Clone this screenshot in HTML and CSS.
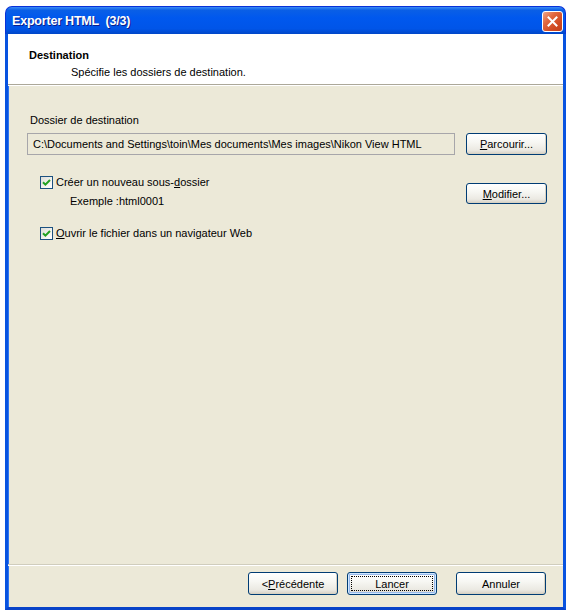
FILE: index.html
```html
<!DOCTYPE html>
<html lang="fr">
<head>
<meta charset="utf-8">
<title>Exporter HTML (3/3)</title>
<link rel="stylesheet" href="styles.css">
</head>
<body>
<div class="window">
  <div class="titlebar">
    <span class="title">Exporter HTML&nbsp; (3/3)</span>
    <span class="close" aria-label="Fermer">
      <svg width="11" height="11" viewBox="0 0 11 11"><path d="M1.5 1.5 L9.5 9.5 M9.5 1.5 L1.5 9.5" stroke="#fff" stroke-width="2" stroke-linecap="square"/></svg>
    </span>
  </div>
  <div class="frame">
    <div class="header">
      <div class="h-title">Destination</div>
      <div class="h-sub">Spécifie les dossiers de destination.</div>
    </div>
    <div class="content">
      <div class="label">Dossier de destination</div>
      <div class="row">
        <div class="field">C:\Documents and Settings\toin\Mes documents\Mes images\Nikon View HTML</div>
        <button class="btn btn-side"><u>P</u>arcourir...</button>
      </div>
      <div class="row row-check">
        <div class="check-group">
          <label class="check"><span class="box"><svg width="9" height="9" viewBox="0 0 9 9"><path d="M1 4.2 L3.4 6.6 L8 2" fill="none" stroke="#21a121" stroke-width="2"/></svg></span>Créer un nouveau sous-<u>d</u>ossier</label>
          <div class="example">Exemple :html0001</div>
        </div>
        <button class="btn btn-side btn-mod"><u>M</u>odifier...</button>
      </div>
      <label class="check check2"><span class="box"><svg width="9" height="9" viewBox="0 0 9 9"><path d="M1 4.2 L3.4 6.6 L8 2" fill="none" stroke="#21a121" stroke-width="2"/></svg></span><u>O</u>uvrir le fichier dans un navigateur Web</label>
    </div>
    <div class="footer">
      <button class="btn">&lt;<u>P</u>récédente</button>
      <button class="btn btn-default"><span class="focus">Lancer</span></button>
      <button class="btn btn-cancel">Annuler</button>
    </div>
  </div>
</div>
</body>
</html>
```
FILE: styles.css
```css
* { box-sizing: border-box; }
html, body { margin: 0; padding: 0; background: #ffffff; }
body {
  font-family: "Liberation Sans", Arial, sans-serif;
  font-size: 11px;
  color: #000;
}
.window {
  margin: 6px 0 0 5px;
  width: 561px;
  height: 604px;
  display: flex;
  flex-direction: column;
}
.titlebar {
  flex: none;
  height: 28px;
  border-radius: 7px 7px 0 0;
  background: linear-gradient(#3b8bf5 0%, #0a5fe6 12%, #0058ee 40%, #0055e8 80%, #0046c8 100%);
  border: 1px solid #0831d9;
  border-bottom: none;
  display: flex;
  align-items: center;
  justify-content: space-between;
  padding: 0 2px 0 6px;
}
.title {
  color: #fff;
  font-family: "Liberation Sans", Arial, sans-serif;
  font-weight: bold;
  font-size: 12.5px;
  letter-spacing: -0.2px;
  text-shadow: 1px 1px 0 #0a1e8c;
}
.close {
  width: 21px;
  height: 21px;
  border: 1px solid #fff;
  border-radius: 3px;
  background: linear-gradient(135deg, #f0a688 0%, #e2673f 35%, #d14a22 70%, #c2401c 100%);
  display: flex;
  align-items: center;
  justify-content: center;
  margin-top: 1px;
}
.frame {
  flex: 1;
  display: flex;
  flex-direction: column;
  background: #ece9d8;
  border-left: 3px solid #0853e0;
  border-right: 3px solid #0853e0;
  border-bottom: 3px solid #0843c8;
  box-shadow: inset 1px 0 0 #2f75f0;
}
.header {
  flex: none;
  height: 51px;
  background: #fff;
  border-bottom: 1px solid #aca899;
  padding: 15px 0 0 21px;
}
.h-title { font-weight: bold; line-height: 13px; }
.h-sub { margin: 4px 0 0 42px; line-height: 13px; }
.content {
  flex: 1;
  padding: 28px 16px 0 19px;
  border-top: 1px solid #fff;
}
.label { padding-left: 3px; line-height: 13px; }
.row {
  display: flex;
  justify-content: space-between;
  align-items: center;
  margin-top: 6px;
}
.field {
  width: 428px;
  height: 22px;
  border: 1px solid #a7a6aa;
  background: #ece9d8;
  padding: 0 0 0 5px;
  line-height: 20px;
  white-space: nowrap;
}
.btn {
  font-family: "Liberation Sans", Arial, sans-serif;
  font-size: 11px;
  color: #000;
  height: 22px;
  width: 81px;
  border: 1px solid #003c74;
  border-radius: 3px;
  background: linear-gradient(#ffffff 0%, #f7f7f3 40%, #ebe9e2 80%, #d6d0c5 100%);
  box-shadow: inset -1px -1px 0 #d8d2c3;
  padding: 0;
  display: flex;
  align-items: center;
  justify-content: center;
}
.row-check {
  align-items: flex-start;
  margin-top: 21px;
}
.check-group { padding-left: 13px; }
.check {
  display: flex;
  align-items: center;
  line-height: 13px;
}
.box {
  width: 13px;
  height: 13px;
  border: 1px solid #1c5180;
  background: linear-gradient(135deg, #dcdcd7 0%, #f3f3ef 60%, #ffffff 100%);
  margin-right: 3px;
  display: flex;
  align-items: center;
  justify-content: center;
}
.example { margin: 6px 0 0 30px; line-height: 13px; }
.btn-mod { margin-top: 7px; height: 21px; }
.check2 { margin: 19px 0 0 13px; }
.footer {
  flex: none;
  height: 43px;
  border-top: 1px solid #d0cdbd;
  box-shadow: inset 0 1px 0 #fff;
  display: flex;
  align-items: flex-start;
  padding: 7px 17px 0 0;
  justify-content: flex-end;
}
.footer .btn { width: 90px; height: 23px; }
.btn-default {
  margin-left: 9px;
  border-color: #003c74;
  box-shadow: inset 0 0 0 1px #cee7ff, inset 0 0 0 2px #98b8ea;
}
.focus {
  border: 1px dotted #000;
  width: 82px;
  height: 15px;
  display: flex;
  align-items: center;
  justify-content: center;
}
.btn-cancel { margin-left: 19px; }
u { text-decoration: underline; text-underline-offset: 1px; }
```
